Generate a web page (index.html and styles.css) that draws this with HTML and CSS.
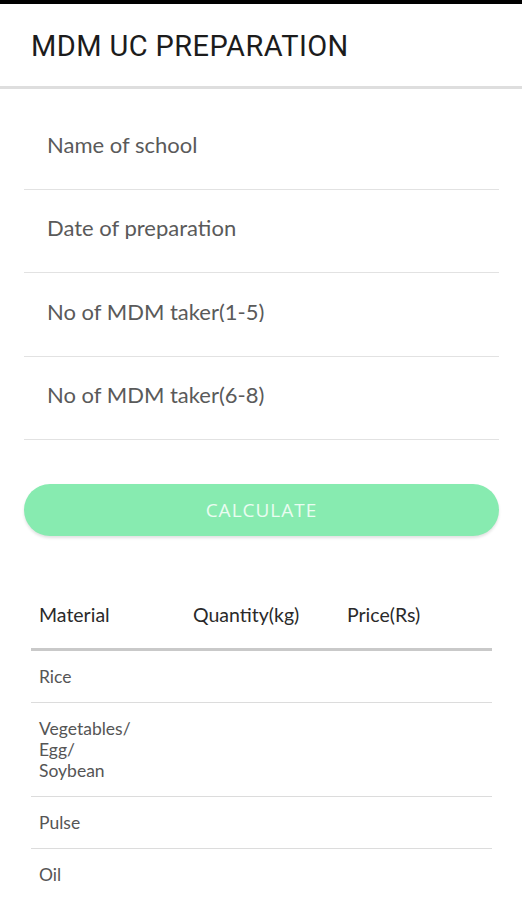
FILE: index.html
```html
<!DOCTYPE html>
<html lang="en">
<head>
    <meta charset="UTF-8">
    <meta name="viewport" content="width=device-width, initial-scale=1.0">
    <title>MDM UC Preparation</title>
    <link rel="stylesheet" href="styles.css">
</head>
<body>
    <div class="status-bar"></div>

    <div class="app-bar">
        <h1 class="app-title">MDM UC PREPARATION</h1>
    </div>

    <div class="form">
        <div class="field field-first">
            <input type="text" class="field-input" placeholder="Name of school">
        </div>
        <div class="field">
            <input type="text" class="field-input" placeholder="Date of preparation">
        </div>
        <div class="field">
            <input type="text" class="field-input" placeholder="No of MDM taker(1-5)">
        </div>
        <div class="field">
            <input type="text" class="field-input" placeholder="No of MDM taker(6-8)">
        </div>

        <button class="calc-button">CALCULATE</button>
    </div>

    <div class="table">
        <div class="table-row table-head">
            <div class="cell">Material</div>
            <div class="cell">Quantity(kg)</div>
            <div class="cell">Price(Rs)</div>
        </div>
        <div class="table-row">
            <div class="cell">Rice</div>
            <div class="cell"></div>
            <div class="cell"></div>
        </div>
        <div class="table-row">
            <div class="cell">Vegetables/<br>Egg/<br>Soybean</div>
            <div class="cell"></div>
            <div class="cell"></div>
        </div>
        <div class="table-row">
            <div class="cell">Pulse</div>
            <div class="cell"></div>
            <div class="cell"></div>
        </div>
        <div class="table-row">
            <div class="cell">Oil</div>
            <div class="cell"></div>
            <div class="cell"></div>
        </div>
    </div>
</body>
</html>
```

FILE: styles.css
```css
* {
    margin: 0;
    padding: 0;
    box-sizing: border-box;
}

body {
    font-family: Lato, "Open Sans", Arial, sans-serif;
    background-color: #ffffff;
    overflow: hidden;
}

.status-bar {
    height: 4px;
    background-color: #000000;
}

.app-bar {
    height: 85px;
    display: flex;
    align-items: center;
    padding-left: 31px;
    background-color: #ffffff;
    border-bottom: 3px solid #dedede;
}

.app-title {
    font-family: Roboto, Arial, sans-serif;
    font-weight: 400;
    font-size: 29px;
    letter-spacing: 0.4px;
    color: #1c1c1c;
    margin-top: 2px;
}

.form {
    padding: 0 23px 0 24px;
}

.field {
    padding: 27px 23px 33px 23px;
    border-bottom: 1px solid #e2e2e2;
}

.field-first {
    margin-top: 17px;
}

.field-input {
    width: 100%;
    height: 22px;
    border: none;
    outline: none;
    background: transparent;
    font-family: Lato, "Open Sans", Arial, sans-serif;
    font-size: 22px;
    color: #333;
}

.field-input::placeholder {
    color: #5a5a5a;
}

.calc-button {
    display: block;
    width: 100%;
    height: 52px;
    margin-top: 44px;
    border: none;
    border-radius: 26px;
    background-color: #87ebb0;
    color: #eafcf1;
    font-family: "Open Sans", Arial, sans-serif;
    font-size: 19px;
    letter-spacing: 1px;
    box-shadow: 0 2px 3px rgba(0, 0, 0, 0.12);
    cursor: pointer;
}

.table {
    margin: 50px 30px 0 31px;
}

.table-row {
    display: grid;
    grid-template-columns: 154px 154px 1fr;
    padding: 15px 8px;
    border-bottom: 1px solid #dcdcdc;
    font-size: 17.5px;
    line-height: 21px;
    color: #555;
}

.table-head {
    padding: 18px 8px 22px 8px;
    border-bottom: 3px solid #c9c9c9;
    font-size: 19.5px;
    line-height: 22px;
    color: #2a2a2a;
}
```
